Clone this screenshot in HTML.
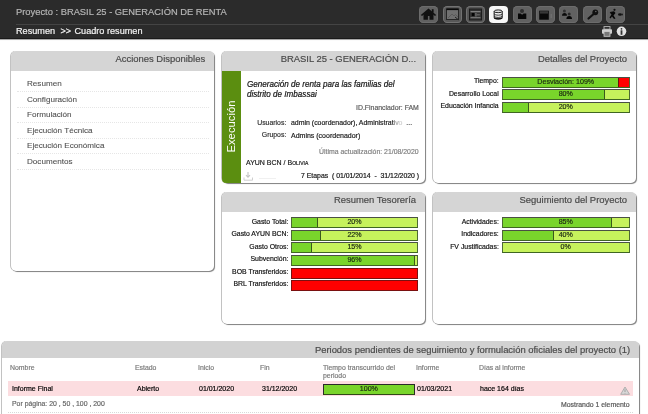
<!DOCTYPE html>
<html><head><meta charset="utf-8">
<style>
*{box-sizing:border-box;margin:0;padding:0}
html,body{width:648px;height:414px;overflow:hidden;background:#fff;font-family:"Liberation Sans",sans-serif}
.abs{position:absolute}
body>*{will-change:transform}
.t,.lbl,.ph,.bar span,#title,#crumb,#crumb2,#crumb3{-webkit-text-stroke:0.18px currentColor}
#hdr{position:absolute;left:0;top:0;width:648px;height:39px;background:#2b2b2b;border-bottom:1px solid #1a1a1a;box-shadow:0 0.6px 0.6px #aaa}
#title{left:16px;top:6px;font-size:9.35px;color:#b6b6b6;white-space:nowrap;line-height:12px}
#sep{left:16px;top:24px;width:632px;height:1px;background:#444}
#crumb,#crumb2,#crumb3{left:16px;top:26.1px;font-size:9.15px;color:#f4f4f4;white-space:nowrap;line-height:11px}
#crumb2{left:60.5px}#crumb3{left:74.5px}
.ib{position:absolute;top:6px;width:19px;height:17px;border-radius:4.5px;background:#616161;box-shadow:inset 0 0 0 1px #6c6c6c}
.ib svg{position:absolute;left:0;top:0}
.panel{position:absolute;background:#fff;border-radius:4px;box-shadow:1px 1px 0.8px #808080, -0.7px 0 0.4px #a8a8a8;border-radius:5px}
.ph{position:absolute;left:0;top:0;right:0;height:20px;background:#d5d5d5;border-radius:5px 5px 0 0;color:#4a4a4a;font-size:9.45px;text-align:right;padding-right:8.9px;line-height:16.8px;white-space:nowrap}
.t{position:absolute;white-space:nowrap;font-size:7px;line-height:9px;color:#333}
.menu{position:absolute;left:17px;width:192px;height:16.3px;border-bottom:1px dotted #e6e6e6;font-size:8.1px;color:#505050;padding-left:10px;line-height:15px;-webkit-text-stroke:0.1px currentColor}
.lbl{position:absolute;text-align:right;white-space:nowrap;font-size:6.9px;color:#111;line-height:11px;margin-top:-1.3px}
.bar{position:absolute;height:11px;background:#c6f25c;border:1px solid #4d6a33;border-top-color:#4a5044;border-bottom-color:#3f6622;font-size:7.1px;color:#1c2a12;text-align:center;line-height:9px;overflow:hidden}
.bar .f{position:absolute;left:0;top:0;bottom:0;background:#79d52b;border-right:1px solid #3a5a1c}
.bar span{position:relative}
.bar.red{background:#ff0000;border-color:#7a1010}
.rb{position:absolute;top:-1px;bottom:-1px;background:#ff0000;border:1px solid #6a1010}
</style></head><body>
<div id="hdr">
 <div id="title" class="abs">Proyecto : BRASIL 25 - GENERACIÓN DE RENTA</div>
 <div id="sep" class="abs"></div>
 <div id="crumb" class="abs">Resumen</div><div id="crumb2" class="abs">&gt;&gt;</div><div id="crumb3" class="abs">Cuadro resumen</div>
 <div class="ib" style="left:419px"><svg width="19" height="17" viewBox="0 0 19 17"><path d="M1.8,9 L9.5,2.6 L17.2,9 L16,10 L9.5,4.8 L3,10 Z" fill="#111"/><path d="M4.5,8.2 L9.5,4.2 L14.5,8.2 V13.8 H10.5 V10 H8.9 V13.8 H4.5 Z" fill="#111"/><rect x="12.8" y="3.2" width="1.8" height="3.5" fill="#111"/></svg></div>
 <div class="ib" style="left:443px;background:#585858;box-shadow:inset 0 0 0 1px #727272"><svg width="19" height="17" viewBox="0 0 19 17"><rect x="3.5" y="3" width="12" height="10.5" fill="#707070" stroke="#262626" stroke-width="1"/><rect x="3.5" y="2.5" width="12" height="1.6" fill="#0a0a0a"/><path d="M5,12 L9,8 L11,10 L12.5,8.5 L15,11" stroke="#555" stroke-width="0.8" fill="none"/><path d="M12,11 L15.5,13.8" stroke="#222" stroke-width="1"/></svg></div>
 <div class="ib" style="left:466px;background:#555;box-shadow:inset 0 0 0 1px #727272"><svg width="19" height="17" viewBox="0 0 19 17"><rect x="3.5" y="3" width="12" height="11" fill="#333" stroke="#1c1c1c" stroke-width="1"/><rect x="4.5" y="5.3" width="10" height="0.9" fill="#a0a0a0"/><rect x="4.5" y="11.3" width="10" height="0.9" fill="#909090"/><rect x="5.8" y="7" width="2.6" height="3" fill="#050505"/><rect x="9.5" y="7" width="0.9" height="3.5" fill="#8a8a8a"/><rect x="10.8" y="8.4" width="3" height="0.9" fill="#7a7a7a"/></svg></div>
 <div class="ib" style="left:489px;background:#f6f6f6;box-shadow:none;border-radius:4px"><svg width="19" height="17" viewBox="0 0 19 17"><ellipse cx="9.2" cy="5.3" rx="4" ry="1.4" fill="#ddd" stroke="#222" stroke-width="1"/><path d="M5.2,5.3 V11.5 A4,1.4 0 0 0 13.2,11.5 V5.3" fill="none" stroke="#222" stroke-width="1.1"/><path d="M5.2,7.8 A4,1.4 0 0 0 13.2,7.8 M5.2,10 A4,1.4 0 0 0 13.2,10" fill="none" stroke="#333" stroke-width="1"/><path d="M5.5,12 A4,1.4 0 0 0 13,12" fill="none" stroke="#111" stroke-width="1.2"/></svg></div>
 <div class="ib" style="left:513px"><svg width="19" height="17" viewBox="0 0 19 17"><circle cx="9" cy="4.9" r="2" fill="#2e2e2e"/><path d="M5,7.6 H7.6 L9.1,8.8 L10.6,7.6 H13.3 V13 H5 Z" fill="#080808"/></svg></div>
 <div class="ib" style="left:536px"><svg width="19" height="17" viewBox="0 0 19 17"><rect x="3.2" y="4.7" width="9.6" height="9" fill="#0a0a0a"/><rect x="4" y="5.2" width="8" height="2.4" fill="#383838"/><path d="M15.2,8 v4" stroke="#7a7a7a" stroke-width="0.8"/></svg></div>
 <div class="ib" style="left:559px"><svg width="19" height="17" viewBox="0 0 19 17"><circle cx="5.4" cy="5" r="1.5" fill="#333"/><path d="M3,9.8 Q3,7 5.5,7 Q8,7 8,9.8 Z" fill="#0a0a0a"/><circle cx="10.2" cy="8.1" r="1.5" fill="#2a2a2a"/><path d="M7.4,13.1 Q7.4,10 10.2,10 Q13,10 13,13.1 Z" fill="#050505"/></svg></div>
 <div class="ib" style="left:583px"><svg width="19" height="17" viewBox="0 0 19 17"><circle cx="12.3" cy="6.3" r="2.9" fill="#111"/><path d="M11.5,7.2 L5.5,12.5" stroke="#111" stroke-width="2.2" stroke-linecap="round"/><circle cx="12.8" cy="5.5" r="0.8" fill="#666"/></svg></div>
 <div class="ib" style="left:606px"><svg width="19" height="17" viewBox="0 0 19 17"><circle cx="8.5" cy="3.8" r="1.1" fill="#111"/><path d="M4,6 L8,5.2 L9.5,7 L7.5,9.5 L9.5,12.5 L8,13 L6,10.5 L4.5,12.5 L3.5,11.5 L5.5,8.5 L4.5,7.5 Z" fill="#080808"/><path d="M3.5,6.5 L6,6 L6,7 Z" fill="#111"/><ellipse cx="14" cy="8.5" rx="2" ry="1.3" fill="#111"/><path d="M15.5,8.5 L17,7.3 L17,9.7 Z" fill="#222"/></svg></div>
 <svg class="abs" style="left:601px;top:25.5px" width="12" height="11" viewBox="0 0 12 11"><rect x="3" y="0.6" width="6" height="2.6" fill="none" stroke="#bbb" stroke-width="0.9"/><rect x="1" y="3.2" width="10" height="4.6" rx="0.8" fill="#cfcfcf"/><rect x="3" y="5.5" width="6" height="4.8" fill="#777" stroke="#ccc" stroke-width="0.8"/></svg>
 <svg class="abs" style="left:615.5px;top:26.3px" width="11" height="11" viewBox="0 0 11 11"><circle cx="5.5" cy="5.3" r="4.8" fill="#e2e2e2"/><circle cx="5.5" cy="2.8" r="0.9" fill="#333"/><rect x="4.6" y="4.3" width="1.8" height="4.5" fill="#333"/></svg>
</div>

<!-- Acciones -->
<div class="panel" style="left:11px;top:51px;width:203px;height:220px">
 <div class="ph">Acciones Disponibles</div>
</div>
<div class="menu" style="top:76px">Resumen</div>
<div class="menu" style="top:91.6px">Configuración</div>
<div class="menu" style="top:107.2px">Formulación</div>
<div class="menu" style="top:122.8px">Ejecución Técnica</div>
<div class="menu" style="top:138.4px">Ejecución Económica</div>
<div class="menu" style="top:154px">Documentos</div>

<!-- Proyecto -->
<div class="panel" style="left:222px;top:51px;width:203px;height:132px">
 <div class="ph">BRASIL 25 - GENERACIÓN D...</div>
</div>
<div class="abs" style="left:222px;top:71px;width:19px;height:112px;background:#5b8e10;border-radius:0 0 0 4px"></div>
<div class="abs" style="left:222px;top:71px;width:19px;height:113px;color:#fff;font-size:11.3px;line-height:19px">
 <div style="position:absolute;left:-47px;top:46px;width:112px;height:19px;transform:rotate(-90deg);text-align:center">Execución</div>
</div>
<div class="t" style="left:247px;top:79.7px;font-size:8.1px;line-height:9px;font-style:italic;color:#111;transform:scaleY(1.2);transform-origin:0 50%">Generación de renta para las familias del<br>distrito de Imbassai</div>
<div class="t" style="left:355.8px;top:103.1px;font-size:6.9px;color:#5a5a5a">ID.Financiador: FAM</div>
<div class="lbl" style="left:240px;width:46.3px;top:117.8px;color:#333">Usuarios:</div>
<div class="t" style="left:291.3px;top:118.2px;font-size:6.95px;color:#1a1a1a">admin (coordenador), Administrat<span style="color:#777">i</span><span style="color:#aaa">v</span><span style="color:#d0d0d0">o</span><span style="color:#444"> &nbsp;...</span></div>
<div class="lbl" style="left:240px;width:46.3px;top:130.3px;color:#333">Grupos:</div>
<div class="t" style="left:291.3px;top:130.9px;font-size:7px;color:#1a1a1a">Admins (coordenador)</div>
<div class="t" style="left:318.8px;top:146.5px;font-size:6.9px;color:#808080">Última actualización: 21/08/2020</div>
<div class="t" style="left:246px;top:157.6px;font-size:7px;color:#1a1a1a">AYUN BCN / <span style="font-variant:small-caps">Bolivia</span></div>
<svg class="abs" style="left:243px;top:170.5px" width="11" height="11" viewBox="0 0 11 11"><path d="M5,1 V6 M3,4.2 L5,6.3 L7,4.2" stroke="#c4c4c4" stroke-width="1.1" fill="none"/><path d="M1,6.5 V9.2 H9.5 V6.5" stroke="#cfcfcf" stroke-width="1" fill="none"/></svg>
<div class="abs" style="left:259px;top:177.5px;width:17px;height:1px;background:#f0f0f0"></div>
<div class="t" style="left:300.6px;top:170.9px;font-size:6.88px;color:#111">7 Etapas &nbsp;( 01/01/2014 &nbsp;- &nbsp;31/12/2020 )</div>

<!-- Detalles -->
<div class="panel" style="left:432.5px;top:51px;width:203px;height:132px">
 <div class="ph">Detalles del Proyecto</div>
</div>
<div class="lbl" style="left:432px;width:66.7px;top:76.5px">Tiempo:</div>
<div class="bar" style="left:502px;top:77px;width:127.5px"><div class="f" style="width:115.00px;border-right:none"></div><div class="rb" style="left:115.00px;width:11.5px"></div><span>Desviación: 109%</span></div>
<div class="lbl" style="left:432px;width:66.7px;top:89px">Desarrollo Local</div>
<div class="bar" style="left:502px;top:89px;width:127.5px"><div class="f" style="width:102.00px"></div><span>80%</span></div>
<div class="lbl" style="left:432px;width:66.7px;top:101.5px">Educación Infancia</div>
<div class="bar" style="left:502px;top:102px;width:127.5px"><div class="f" style="width:26.20px"></div><span>20%</span></div>

<!-- Tesoreria -->
<div class="panel" style="left:222px;top:192px;width:203px;height:132px">
 <div class="ph">Resumen Tesorería</div>
</div>
<div class="lbl" style="left:222px;width:66.4px;top:217px">Gasto Total:</div>
<div class="bar" style="left:291px;top:217px;width:127px"><div class="f" style="width:26.40px"></div><span>20%</span></div>
<div class="lbl" style="left:222px;width:66.4px;top:229.5px">Gasto AYUN BCN:</div>
<div class="bar" style="left:291px;top:230px;width:127px"><div class="f" style="width:29.30px"></div><span>22%</span></div>
<div class="lbl" style="left:222px;width:66.4px;top:242px">Gasto Otros:</div>
<div class="bar" style="left:291px;top:242px;width:127px"><div class="f" style="width:20.20px"></div><span>15%</span></div>
<div class="lbl" style="left:222px;width:66.4px;top:254.5px">Subvención:</div>
<div class="bar" style="left:291px;top:255px;width:127px"><div class="f" style="width:123.00px"></div><span>96%</span></div>
<div class="lbl" style="left:222px;width:66.4px;top:267px">BOB Transferidos:</div>
<div class="bar red" style="left:291px;top:268px;width:127px"></div>
<div class="lbl" style="left:222px;width:66.4px;top:279.5px">BRL Transferidos:</div>
<div class="bar red" style="left:291px;top:280px;width:127px"></div>

<!-- Seguimiento -->
<div class="panel" style="left:432.5px;top:192px;width:203px;height:132px">
 <div class="ph">Seguimiento del Proyecto</div>
</div>
<div class="lbl" style="left:432px;width:66.8px;top:217px">Actividades:</div>
<div class="bar" style="left:502px;top:217px;width:127.5px"><div class="f" style="width:109.00px"></div><span>85%</span></div>
<div class="lbl" style="left:432px;width:66.8px;top:229.5px">Indicadores:</div>
<div class="bar" style="left:502px;top:230px;width:127.5px"><div class="f" style="width:51.10px"></div><span>40%</span></div>
<div class="lbl" style="left:432px;width:66.8px;top:242px">FV Justificadas:</div>
<div class="bar" style="left:502px;top:242px;width:127.5px"><span>0%</span></div>

<!-- Bottom -->
<div class="panel" style="left:2px;top:341px;width:637px;height:90px">
 <div class="ph" style="height:16.5px;line-height:17.4px;background:#d2d2d2;padding-right:8.8px;font-size:9.42px">Periodos pendientes de seguimiento y formulación oficiales del proyecto (1)</div>
</div>
<div class="t" style="left:10.2px;top:363px;color:#7a7a7a;font-size:6.9px">Nombre</div>
<div class="t" style="left:135px;top:363px;color:#7a7a7a;font-size:6.9px">Estado</div>
<div class="t" style="left:198px;top:363px;color:#7a7a7a;font-size:6.9px">Inicio</div>
<div class="t" style="left:260px;top:363px;color:#7a7a7a;font-size:6.9px">Fin</div>
<div class="t" style="left:322.5px;top:363.7px;color:#7a7a7a;font-size:6.9px;line-height:8.4px">Tiempo transcurrido del<br>periodo</div>
<div class="t" style="left:416px;top:363px;color:#7a7a7a;font-size:6.9px">Informe</div>
<div class="t" style="left:478.5px;top:363px;color:#7a7a7a;font-size:6.9px">Días al informe</div>
<div class="abs" style="left:8px;top:381.4px;width:624.5px;height:15.3px;background:#fcdde0"></div>
<div class="t" style="left:11.9px;top:384px;color:#000;font-size:7px">Informe Final</div>
<div class="t" style="left:136.5px;top:384px;color:#000;font-size:7px">Abierto</div>
<div class="t" style="left:199px;top:384px;color:#000;font-size:7px">01/01/2020</div>
<div class="t" style="left:261.7px;top:384px;color:#000;font-size:7px">31/12/2020</div>
<div class="bar" style="left:323.3px;top:384px;width:91.7px;height:10.5px;border-color:#2a2a2a;border-bottom-color:#2f4a18"><div class="f" style="width:100%;border-right:none"></div><span>100%</span></div>
<div class="t" style="left:417px;top:384px;color:#000;font-size:7px">01/03/2021</div>
<div class="t" style="left:479.6px;top:384px;color:#000;font-size:7px">hace 164 días</div>
<svg class="abs" style="left:619.5px;top:385.5px" width="11" height="9" viewBox="0 0 11 9"><path d="M5,1 L9.5,8.3 H0.7 Z" fill="#d8d8d8" stroke="#a8a8a8" stroke-width="0.9"/><path d="M5,3.3 V6" stroke="#999" stroke-width="0.9"/><circle cx="5" cy="7.2" r="0.45" fill="#999"/></svg>
<div class="abs" style="left:8px;top:411.5px;width:625px;height:1px;border-top:1px dotted #d8d8d8"></div>
<div class="t" style="left:11.9px;top:399px;color:#666;font-size:6.9px">Por página: 20 , 50 , 100 , 200</div>
<div class="t" style="left:560.7px;top:399.5px;color:#555;font-size:6.9px">Mostrando 1 elemento</div>
</body></html>
